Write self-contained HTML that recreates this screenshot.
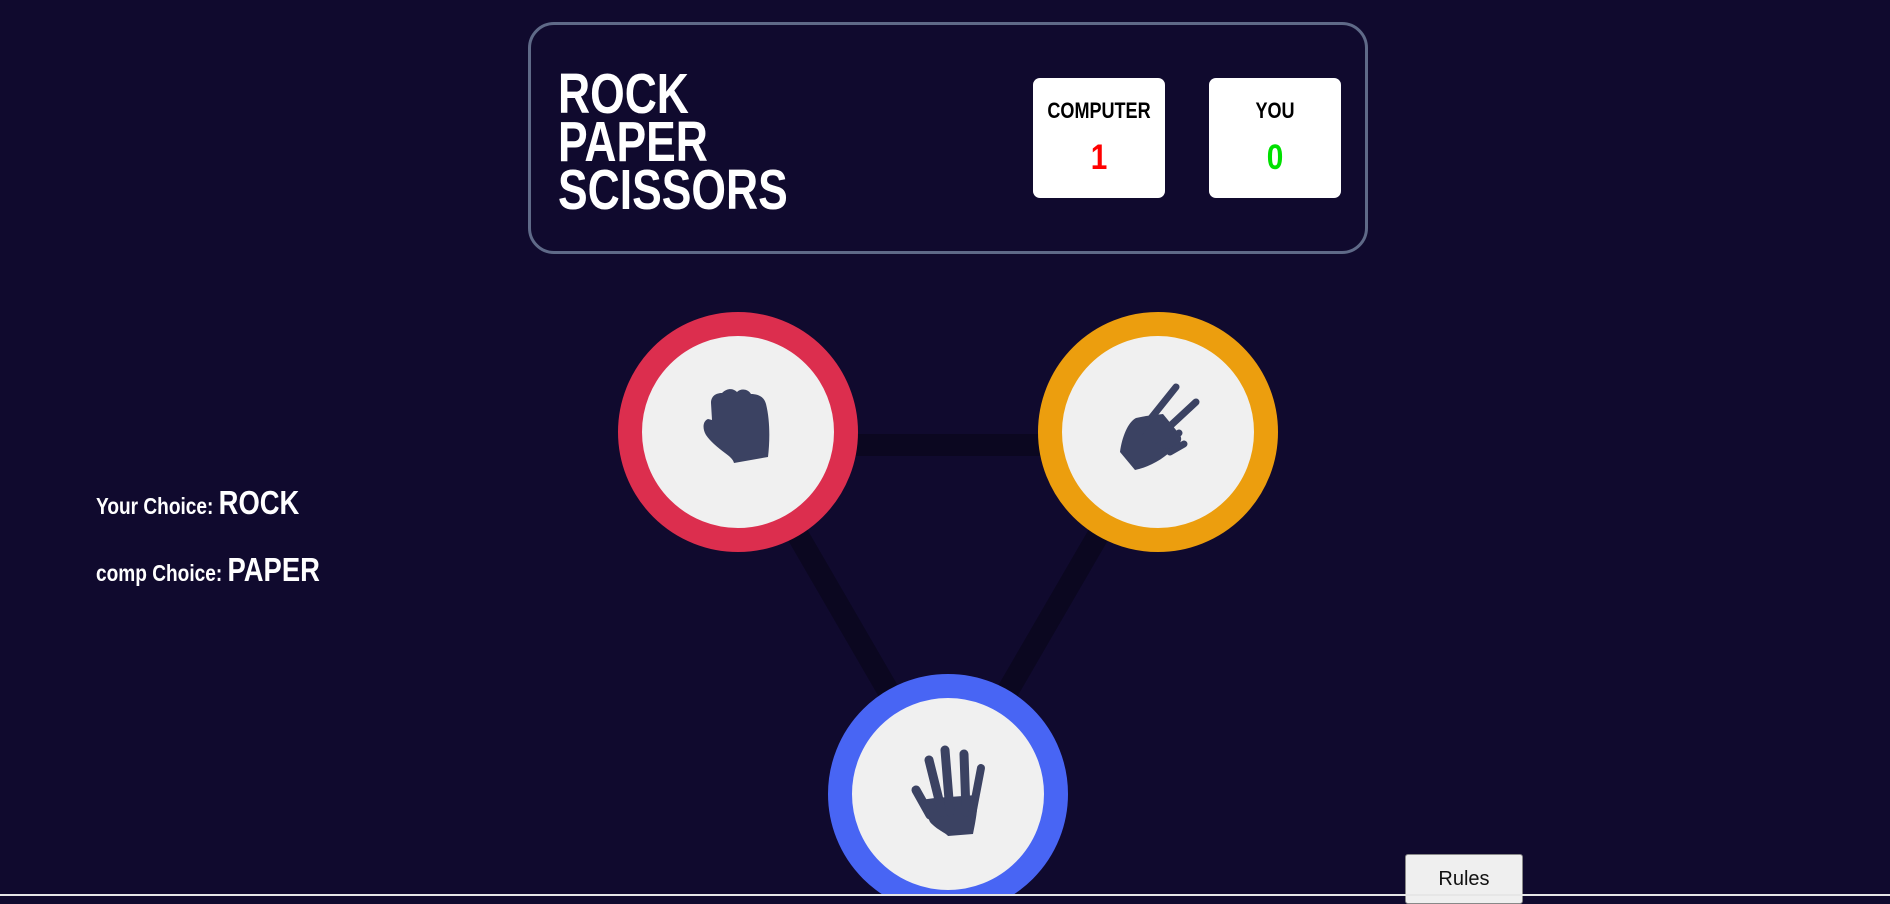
<!DOCTYPE html>
<html><head><meta charset="utf-8"><style>
html,body{margin:0;padding:0}
body{width:1890px;height:896px;background:#100a2e;position:relative;overflow:hidden;font-family:"Liberation Sans",sans-serif;color:#fff}
.hdr{position:absolute;left:528px;top:22px;width:840px;height:232px;border:3px solid #5f6a88;border-radius:26px;box-sizing:border-box}
.title{position:absolute;left:558px;top:70px;font-weight:bold;font-size:57px;line-height:48px;transform:scaleX(0.78);transform-origin:0 0}
.card{position:absolute;top:78px;width:132px;height:120px;background:#fff;border-radius:7px;text-align:center;color:#000;font-weight:bold}
.card .l{position:absolute;left:0;right:0;top:20px;font-size:22px;transform:scaleX(0.82)}
.card .n{position:absolute;left:0;right:0;top:60px;font-size:35px;transform:scaleX(0.85)}
.txt{position:absolute;left:96px;font-weight:bold;font-size:23px;white-space:nowrap;transform:scaleX(0.83);transform-origin:0 0}
.txt b{font-size:33px}
.rules{position:absolute;left:1405px;top:854px;width:118px;height:50px;background:#efefef;border:1px solid #888;border-radius:3px;box-sizing:border-box;color:#111;font-size:20px;text-align:center;padding-top:13px}
.strip{position:absolute;left:0;top:894px;width:1890px;height:2px;background:#e6e6e6}
</style></head><body>
<div class="hdr"></div>
<div class="title">ROCK<br>PAPER<br>SCISSORS</div>
<div class="card" style="left:1033px"><div class="l">COMPUTER</div><div class="n" style="color:#ff0000">1</div></div>
<div class="card" style="left:1209px"><div class="l">YOU</div><div class="n" style="color:#00e000">0</div></div>
<div class="txt" style="top:484px">Your Choice: <b>ROCK</b></div>
<div class="txt" style="top:551px">comp Choice: <b>PAPER</b></div>
<svg width="1890" height="896" style="position:absolute;left:0;top:0">
<g stroke="#0b0720" stroke-width="22">
<line x1="738" y1="445" x2="1158" y2="445"/>
<line x1="738" y1="432" x2="948" y2="794"/>
<line x1="1158" y1="432" x2="948" y2="794"/>
</g>
<circle cx="738" cy="432" r="108" fill="#f0f0f0" stroke="#dc2e4e" stroke-width="24"/>
<circle cx="1158" cy="432" r="108" fill="#f0f0f0" stroke="#ec9e0e" stroke-width="24"/>
<circle cx="948" cy="794" r="108" fill="#f0f0f0" stroke="#4865f4" stroke-width="24"/>
<g fill="#3b4262">
<path d="M706,435 C702,428 703,421 708,419 L712,420 L711,403 C711,396 716,393 722,393 C727,388 733,388 737,392 C741,388 748,389 751,394 C757,394 764,396 766,404 C770,420 770,440 768,457 L734,463 C733,459 729,456 725,453 C717,447 710,441 706,435 Z"/>
<path d="M1120,452 C1122,437 1128,422 1136,418 L1146,416 L1163,414 L1172,425 L1180,435 C1183,440 1180,444 1174,448 C1165,458 1150,467 1135,470 Z"/>
<path d="M920,800 L930,822 C937,830 946,833 948,836 L973,834 C977,815 978,805 977,795 L935,798 Z"/>
</g>
<g stroke="#3b4262" stroke-width="7" stroke-linecap="round" fill="none">
<line x1="1140" y1="432" x2="1176" y2="387"/>
<line x1="1155" y1="440" x2="1196" y2="402"/>
<line x1="1165" y1="445" x2="1179" y2="433"/>
<line x1="1170" y1="452" x2="1184" y2="444"/>
<line x1="929" y1="760" x2="942" y2="812" stroke-width="9"/>
<line x1="945" y1="750" x2="950" y2="812" stroke-width="9"/>
<line x1="964" y1="754" x2="966" y2="812" stroke-width="9"/>
<line x1="981" y1="768" x2="972" y2="815" stroke-width="8"/>
<line x1="916" y1="790" x2="930" y2="815" stroke-width="9"/>
</g>
</svg>
<div class="rules">Rules</div>
<div class="strip"></div>
</body></html>
